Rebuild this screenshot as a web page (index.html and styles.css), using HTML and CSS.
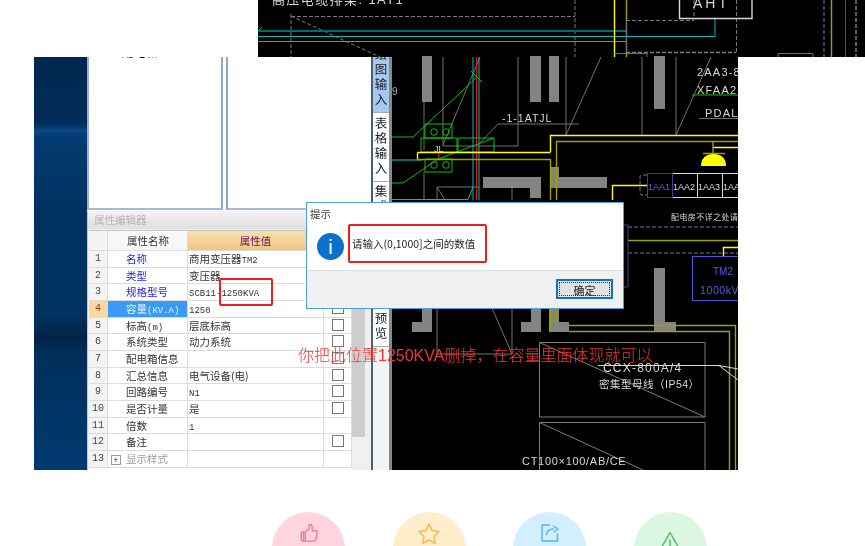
FILE: index.html
```html
<!DOCTYPE html>
<html lang="zh-CN">
<head>
<meta charset="utf-8">
<title>提示</title>
<link rel="stylesheet" href="styles.css">
</head>
<body>
<div class="page">
  <div class="top">
    <svg class="cad-top" width="607" height="57" viewBox="258 0 607 57">
      <text class="cad-text" x="272" y="4" font-size="13" letter-spacing="1.400">高压电缆排架: 1AT1</text>
      <path class="dash" d="M291 14V57M291 16.500H575M291 16L380 57M575 0V57M694 0V20M736.500 0V52M626 20.500H694M824 0V57"/>
      <path class="dash thick" d="M856 0V57M626 52.500H736"/>
      <path class="green" d="M259 30L262 27"/>
      <path class="teal-thick" d="M258 31H626"/>
      <path class="cyan" d="M258 36.500H715V19M258 41.500H626"/>
      <path class="yellow" d="M614.500 0V57"/>
      <path class="olive" d="M626.500 0V57M831.500 0V57"/>
      <path class="grey" d="M626.500 20V52M614 53.500H647V57M778 57V53.500H813V57"/>
      <path class="white-box" d="M679.500 0V18.500H752V0"/>
      <text class="cad-text" x="693" y="8" font-size="14" letter-spacing="3">AHT</text>
      <path class="red" d="M845.500 0V57"/>
      <path class="column" d="M422 56h10v1h-10zM530 56h11v1h-11zM549 56h10v1h-10zM654 56h11v1h-11z"/>
    </svg>
  </div>

  <div class="shot">
    <div class="desktop"></div>

    <div class="app">
      <div class="panes">
        <div class="pane pane-first"><span class="clip-text">一 配电箱</span></div>
        <div class="pane pane-second"></div>
      </div>
      <div class="editor">
        <div class="editor-title">属性编辑器</div>
        <div class="editor-body">
          <div class="grid">
            <div class="row head"><span class="c-no"></span><span class="c-name">属性名称</span><span class="c-val">属性值</span><span class="c-chk"></span></div>
            <div class="row"><span class="c-no">1</span><span class="c-name link">名称</span><span class="c-val">商用变压器<i class="mono">TM2</i></span><span class="c-chk"><b class="box"></b></span></div>
            <div class="row"><span class="c-no">2</span><span class="c-name link">类型</span><span class="c-val">变压器</span><span class="c-chk"><b class="box"></b></span></div>
            <div class="row"><span class="c-no">3</span><span class="c-name link">规格型号</span><span class="c-val"><i class="mono">SCB11-1250KVA</i></span><span class="c-chk"><b class="box"></b></span></div>
            <div class="row active"><span class="c-no">4</span><span class="c-name">容量<i class="mono">(KV.A)</i></span><span class="c-val"><i class="mono">1250</i></span><span class="c-chk"><b class="box"></b></span></div>
            <div class="row"><span class="c-no">5</span><span class="c-name">标高<i class="mono">(m)</i></span><span class="c-val">层底标高</span><span class="c-chk"><b class="box"></b></span></div>
            <div class="row"><span class="c-no">6</span><span class="c-name">系统类型</span><span class="c-val">动力系统</span><span class="c-chk"><b class="box"></b></span></div>
            <div class="row"><span class="c-no">7</span><span class="c-name">配电箱信息</span><span class="c-val"></span><span class="c-chk"><b class="box"></b></span></div>
            <div class="row"><span class="c-no">8</span><span class="c-name">汇总信息</span><span class="c-val">电气设备(电)</span><span class="c-chk"><b class="box"></b></span></div>
            <div class="row"><span class="c-no">9</span><span class="c-name">回路编号</span><span class="c-val"><i class="mono">N1</i></span><span class="c-chk"><b class="box"></b></span></div>
            <div class="row"><span class="c-no">10</span><span class="c-name">是否计量</span><span class="c-val">是</span><span class="c-chk"><b class="box"></b></span></div>
            <div class="row"><span class="c-no">11</span><span class="c-name">倍数</span><span class="c-val"><i class="mono">1</i></span><span class="c-chk"></span></div>
            <div class="row"><span class="c-no">12</span><span class="c-name">备注</span><span class="c-val"></span><span class="c-chk"><b class="box"></b></span></div>
            <div class="row muted"><span class="c-no">13</span><span class="c-name"><b class="plus">+</b>显示样式</span><span class="c-val"></span><span class="c-chk"></span></div>
          </div>
          <div class="scroll"><div class="thumb"></div></div>
        </div>
      </div>
    </div>

    <div class="tabs">
      <div class="tab tab-on"><span>绘图输入</span></div>
      <div class="tab tab-two"><span>表格输入</span></div>
      <div class="tab tab-three"><span>集成</span><span>预览</span></div>
      <div class="tab-rest"></div>
    </div>

    <svg class="cad" width="346" height="413" viewBox="392 57 346 413">
      <text class="cad-dim" x="392" y="95" font-size="10">9</text>
      <path class="grey" d="M443 57V146H518V57M424 57V150M424 172V200M566 57V135M601 57L566 135M642 57V135M676 57V135M711 57L676 135M480 57L443 145M498 124H579M498 124L478 145M437 300V354H512V300M492 308L512 354M437 187V200M437 187H473M437 187L445 200M512 187V200"/>
      <path class="column" d="M422 57h10v45h-10zM530 57h11v45h-11zM549 57h10v45h-10zM654 57h11v52h-11zM483 177h58v11h-58zM530 188h11v10h-11zM550 167h9v21h-9zM559 177h48v11h-48zM412 322h20v10h-20zM422 308h10v14h-10zM521 322h20v10h-20zM531 308h10v14h-10zM549 322h20v10h-20zM549 308h10v14h-10zM654 322h22v10h-22zM654 268h11v54h-11z"/>
      <path class="cyan" d="M473 57V200M479 57V200M391 199.500H468L473 187H479"/>
      <path class="teal-thick" d="M391 160H422"/>
      <path class="red" d="M476.500 57V200M438.500 153V159"/>
      <path class="green" d="M391 137H413L476 78M471 71L482 82M425 124H452V138H425ZM421 138H457V152H421ZM458 138H494V152H458ZM494 138L438 159L403 183H391M425 159H452V172H425ZM692 95H738"/>
      <circle class="green" cx="434" cy="132" r="3.300"/>
      <circle class="green" cx="446" cy="132" r="3.300"/>
      <circle class="green" cx="434" cy="165" r="3.300"/>
      <circle class="green" cx="446" cy="165" r="3.300"/>
      <path class="yellow" d="M550.500 152V135.500H738M417.500 152.500H550.500M417.500 152.500V159.500M612.500 200V185.500H647M713 147.500H738M723.500 256V247.500H738"/>
      <path class="olive" d="M417 159.500H550.500V200M556.500 200V141.500H738M550.500 159V167M713 142V153M703 153.500H725M628 240.500H738M569 325.500H735.500V470M569 331.500H729.500V470M676 325.500H654M550.500 308V332M556.500 308V322"/>
      <path class="lamp" d="M701 166C701 158 706 154 713.500 154C721 154 726 158 726 166Z"/>
      <path class="dash" d="M647 175H642Q640 175 640 177V193Q640 195 642 195H647M628 227H738M628 253H738"/>
      <path class="white-line" d="M672 173.500H738M672 197.500H738M697.500 173V198M722.500 173V198"/>
      <rect class="navy" x="647.500" y="173.500" width="25" height="24"/>
      <path class="navy" d="M623 225H628V287H623"/>
      <rect class="blue-box" x="692.500" y="256.500" width="50" height="44"/>
      <text class="cad-blue" x="648" y="190" font-size="9">1AA1</text>
      <text class="cad-text" x="673" y="190" font-size="9">1AA2</text>
      <text class="cad-text" x="698" y="190" font-size="9">1AA3</text>
      <text class="cad-text" x="723" y="190" font-size="9">1AA</text>
      <text class="cad-text" x="671" y="220" font-size="8" letter-spacing=".4">配电房不详之处请</text>
      <text class="cad-text" x="697" y="76" font-size="11" letter-spacing="1.200">2AA3-8</text>
      <text class="cad-text" x="697" y="94" font-size="11" letter-spacing="1.200">XFAA2-</text>
      <text class="cad-text" x="705" y="117" font-size="11" letter-spacing="1.200">PDAL</text>
      <path class="grey" d="M699 118.500H738"/>
      <text class="cad-text" x="502" y="122" font-size="10.500" letter-spacing="1">-1-1ATJL</text>
      <text class="cad-text" x="434" y="152" font-size="9">JL</text>
      <text class="cad-blue" x="713" y="275" font-size="10">TM2</text>
      <text class="cad-blue" x="700" y="294" font-size="10.500" letter-spacing=".6">1000kVA</text>
      <path class="grey-box" d="M539.500 342.500H705V417H539.500ZM539.500 342.500L705 417M539.500 422.500H705V470M539.500 422.500V470M539.500 422.500L643 470"/>
      <path class="white-line" d="M598 365.500H719L738 380M719 365.500L738 369"/>
      <text class="cad-text" x="603" y="372" font-size="12" letter-spacing="1.200">CCX-800A/4</text>
      <text class="cad-text" x="599" y="388" font-size="10.500" letter-spacing=".5">密集型母线（IP54）</text>
      <text class="cad-text" x="522" y="465" font-size="11" letter-spacing=".7">CT100×100/AB/CE</text>
    </svg>

    <div class="mark mark-spec"></div>

    <div class="dialog">
      <div class="dialog-title">提示</div>
      <div class="dialog-body">
        <span class="info">i</span>
        <span class="dialog-msg">请输入(0,1000]之间的数值</span>
      </div>
      <div class="dialog-foot"><button class="ok" type="button"><span>确定</span></button></div>
    </div>

    <div class="note">你把此位置1250KVA删掉，在容量里面体现就可以</div>
  </div>

  <div class="actions">
    <div class="act act-like">
      <svg class="act-icon" width="20" height="20" viewBox="0 0 22 22"><path d="M2.500 10H7V20H4.500Q2.500 20 2.500 18ZM7 10L11 6V2.500Q11 1.500 12 1.500Q14.500 1.500 14.500 5V8.500H18.500Q20.500 8.500 20 10.500L18.500 18Q18 20 16 20H7"/><path d="M5 10V20"/></svg>
    </div>
    <div class="act act-star">
      <svg class="act-icon" width="24" height="24" viewBox="0 0 24 24"><path d="M12 2L15 8.500L22 9.500L17 14.500L18.200 21.500L12 18L5.800 21.500L7 14.500L2 9.500L9 8.500Z"/></svg>
    </div>
    <div class="act act-share">
      <svg class="act-icon" width="20" height="20" viewBox="0 0 20 20"><path d="M9.500 2H2V18H17.500V11"/><path d="M6.500 11.500C7 8 9.500 6 13.500 6M13.500 3L18 6L14 9"/></svg>
    </div>
    <div class="act act-warn">
      <svg class="act-icon" width="24" height="24" viewBox="0 0 24 24"><path d="M12 1.500L23 21H1Z"/><path d="M12 9V15"/></svg>
    </div>
  </div>
</div>
</body>
</html>
```
FILE: styles.css
```css
*, *::before, *::after { box-sizing: border-box; }
html, body { margin: 0; padding: 0; background: #fff; overflow: hidden; }
body { font-family: "Noto Sans CJK SC", "Liberation Sans", sans-serif; }

.page { width: 865px; height: 546px; overflow: hidden; }

.top { display: flex; justify-content: flex-end; height: 57px; }
.cad-top, .cad { display: block; background: #000; flex: none; filter: blur(.3px); }

.shot { position: relative; display: flex; width: 704px; height: 413px; margin-left: 34px; }

.desktop {
  flex: none; width: 53px;
  background: linear-gradient(180deg, #00274e 0, #012c58 16%, #04386c 17%, #0a4888 17.800%, #043a70 19.500%, #00325f 40%, #00335f 62%, #002446 68%, #002f5a 72%, #003a72 100%);
}

.app { flex: none; width: 284px; display: flex; flex-direction: column; background: #fff; filter: blur(.25px); }
.panes { display: flex; height: 154px; padding: 0 0 1px; gap: 3px; }
.pane { background: #fff; border-bottom: 2px solid #a6b8d4; overflow: hidden; }
.pane-first { width: 136px; border-left: 2px solid #9db3d6; border-right: 2px solid #8ea8d2; }
.pane-second { flex: 1; border-left: 2px solid #8ea8d2; }
.clip-text { display: block; margin: -11px 0 0 18px; font-size: 12px; line-height: 12px; color: #111; }

.editor { flex: 1; display: flex; flex-direction: column; background: #f0f0f0; border-left: 1px solid #c8c8c8; }
.editor-title { height: 18px; padding: 1px 0 0 6px; font-size: 10.500px; line-height: 16px; color: #b4b4b4; background: linear-gradient(180deg, #f3f3f3, #dfdfdf); }
.editor-body { flex: 1; display: flex; min-height: 0; padding: 1px 0 0 1px; }
.grid { flex: none; width: 263px; background: #fff; border-top: 1px solid #c4c4cc; }

.row { display: flex; height: 16.670px; font-size: 10.500px; line-height: 16px; color: #333; border-bottom: 1px solid #dcdcdc; }
.row span { display: block; white-space: nowrap; overflow: hidden; border-right: 1px solid #dcdcdc; }
.c-no { flex: none; width: 19px; text-align: center; background: #f4f4f4; font-family: "Liberation Mono", monospace; font-size: 10px; color: #444; }
.c-name { flex: none; width: 80px; padding-left: 18px; }
.c-val { flex: none; width: 136px; padding-left: 1px; }
.c-chk { flex: none; width: 28px; padding: 1px 0 0 8px; }

.head { height: 20px; line-height: 19px; font-size: 10.500px; }
.head .c-name { padding-left: 19px; background: #f7f7f7; }
.head .c-val { padding-left: 0; text-align: center; color: #6c0a6c; background: linear-gradient(180deg, #f8e2ac, #f0c67e); }
.head .c-chk { background: #f0c67e; }

.link { color: #2424ee; }
.active .c-no { background: #fbd8a0; color: #a4342c; }
.active .c-name { background: #3a9af8; color: #eaf4ff; }
.muted .c-name { color: #9a9a9a; padding-left: 3px; }

.mono { font-family: "Liberation Mono", monospace; font-style: normal; font-weight: 400; font-size: 9px; }
.box { display: block; width: 12px; height: 12px; background: #fff; border: 1px solid #777; }
.plus { display: inline-block; width: 10px; height: 10px; margin-right: 5px; border: 1px solid #999; font: 400 9px/8px "Liberation Sans", sans-serif; text-align: center; color: #444; }

.scroll { flex: none; width: 18px; padding: 0 5px 0 0; background: #f0f0f0; }
.thumb { height: 207px; background: #cdcdcd; }

.tabs { flex: none; width: 21px; display: flex; flex-direction: column; background: #fff; border-left: 2px solid #46607c; border-right: 3px solid #7f8a92; font-size: 12.500px; line-height: 15px; color: #222; filter: blur(.25px); }
.tab { display: flex; flex-direction: column; overflow: hidden; align-items: center; border-bottom: 1px solid #aaa; }
.tab span { display: block; width: 13px; text-align: center; word-break: break-all; }
.tab-on { height: 56px; justify-content: flex-end; background: #a6c8f0; padding-bottom: 6px; }
.tab-two { height: 69px; padding-top: 2px; background: #fff; }
.tab-three { height: 165px; padding: 1px 0 6px; justify-content: space-between; background: #fff; }
.tab-rest { flex: 1; background: #f3f3f3; }

.cad { width: 346px; height: 413px; }
.cad path, .cad-top path, .cad circle { fill: none; stroke-width: 1; }
.cad .column, .cad-top .column { fill: #838383; stroke: none; }
.cad .lamp { fill: #ffff00; stroke: none; }
.dash { stroke: #7a7a7a; stroke-dasharray: 4 2; }
.cad .yellow, .cad-top .yellow, .cad .olive, .cad-top .olive { stroke-width: 1.400; }
.thick { stroke-width: 1.600 !important; }
.grey { stroke: #707070; }
.grey-box { stroke: #7c7c7c; }
.white-line { stroke: #d8d8d8; }
.white-box { stroke: #d8d8d8; stroke-width: 1.400 !important; }
.green { stroke: #0cc00c; }
.teal-thick { stroke: #006c6c; stroke-width: 2 !important; }
.cyan { stroke: #00bcc4; }
.red { stroke: #f01010; }
.yellow { stroke: #ffff00; }
.olive { stroke: #a0a000; }
.navy { stroke: #40408c; }
.blue-box { fill: none; stroke: #5050d8; }
.cad rect.navy { fill: none; }
.cad-text { fill: #d8d8d8; font-family: "Liberation Sans", "Noto Sans CJK SC", sans-serif; }
.cad-blue { fill: #5a5ae6; font-family: "Liberation Sans", sans-serif; }
.cad-dim { fill: #aaa; font-family: "Liberation Sans", sans-serif; }

.mark { position: absolute; border: 2px solid #f01c1c; border-radius: 2px; }
.mark-spec { left: 185px; top: 221px; width: 54px; height: 28px; }

.dialog { position: absolute; left: 272px; top: 145px; width: 318px; height: 107px; display: flex; flex-direction: column; background: #fff; border: 1px solid #4c9fe0; filter: blur(.2px); }
.dialog-title { height: 21px; padding: 2px 0 0 3px; font-size: 10.500px; line-height: 17px; color: #333; }
.dialog-body { flex: 1; position: relative; display: flex; align-items: center; padding: 0 0 2px 10px; }
.dialog-body::after { content: ""; position: absolute; left: 41px; top: 0; width: 139px; height: 39px; border: 2px solid #f01c1c; border-radius: 2px; }
.info { flex: none; width: 27px; height: 27px; border-radius: 50%; background: #0b72c9; color: #fff; font: 400 21px/27px "Liberation Sans", sans-serif; text-align: center; }
.dialog-msg { margin: 0 0 4px 8px; font-size: 10.500px; line-height: 16px; color: #222; white-space: nowrap; }
.dialog-foot { flex: none; height: 38px; display: flex; justify-content: flex-end; align-items: flex-start; padding: 8px 10px 0 0; background: #f0f0f0; border-top: 1px solid #dedede; }
.ok { width: 57px; height: 20px; padding: 1px; margin: 0; background: #e1e1e1; border: 2px solid #0f73c4; font: 400 11px/14px "Noto Sans CJK SC", sans-serif; color: #222; }
.ok span { display: block; height: 14px; border: 1px dotted #333; }

.note { position: absolute; left: 264px; top: 288px; font: 300 16px/22px "Liberation Sans", "Noto Sans CJK SC", sans-serif; color: #f43434; white-space: nowrap; filter: blur(.2px); }

.actions { display: flex; gap: 47.670px; margin: 42px 0 0 272px; }
.act { flex: none; width: 73px; height: 73px; border-radius: 50%; display: flex; justify-content: center; padding-top: 11px; }
.act-icon { display: block; fill: none; stroke-width: 1.500; stroke-linejoin: round; stroke-linecap: round; filter: blur(.2px); }
.act-like { background: #ffd6df; stroke: #ff7489; }
.act-star { background: #ffedcc; stroke: #fbb950; padding-top: 10px; }
.act-share { background: #d2eeff; stroke: #55b4f6; }
.act-warn { background: #dcf7e1; stroke: #4cbf68; padding-top: 19px; }
```
